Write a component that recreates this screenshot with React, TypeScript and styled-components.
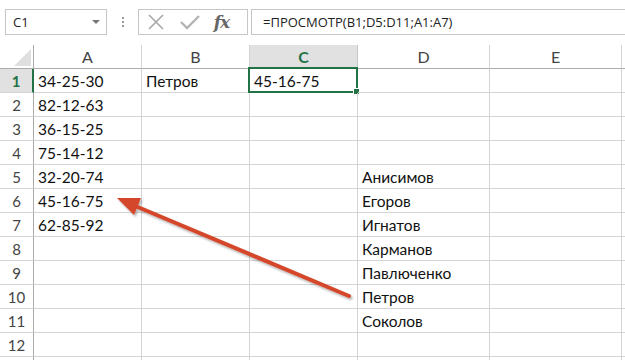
import React from "react";
import styled, { createGlobalStyle, css } from "styled-components";

const Global = createGlobalStyle`
  html, body { margin: 0; padding: 0; background: #fff; }
  #root { width: 625px; height: 360px; overflow: hidden; }
`;

const COLS = "34px 108px 108px 108px 132px 132px 132px";
const GRID = "#d4d4d4";
const HEAD_LINE = "#ababab";
const GREEN = "#217346";

const Page = styled.div`
  position: relative;
  width: 625px;
  height: 360px;
  overflow: hidden;
  background: #fff;
  font-family: Lato, "Open Sans", sans-serif;
`;

const FormulaRow = styled.div`
  display: flex;
  align-items: flex-start;
  height: 45px;
  padding: 9px 0 0 5px;
  box-sizing: border-box;
  font-family: "Open Sans", "Noto Sans", sans-serif;
  font-size: 13px;
  color: #222;
`;

const NameBox = styled.div`
  width: 102px;
  height: 26px;
  box-sizing: border-box;
  border: 1px solid #c6c6c6;
  display: flex;
  align-items: center;
  justify-content: space-between;
  padding: 0 6px 0 7px;
`;

const Caret = styled.span`
  width: 0;
  height: 0;
  border-left: 4px solid transparent;
  border-right: 4px solid transparent;
  border-top: 4px solid #777;
`;

const Dots = styled.div`
  width: 31px;
  height: 26px;
  display: flex;
  flex-direction: column;
  align-items: center;
  justify-content: center;
  gap: 2px;
  span {
    width: 2px;
    height: 2px;
    background: #9a9a9a;
  }
`;

const IconBox = styled.div`
  width: 110px;
  height: 26px;
  box-sizing: border-box;
  border: 1px solid #c6c6c6;
  display: flex;
  align-items: center;
  padding: 0 0 0 8px;
`;

const IconSlot = styled.div`
  width: 37px;
  display: flex;
  align-items: center;
`;

const Fx = styled.span`
  font-family: "DejaVu Serif", "Liberation Serif", serif;
  font-style: italic;
  font-weight: bold;
  font-size: 17px;
  color: #666;
  letter-spacing: -1px;
`;

const FormulaInput = styled.div`
  flex: 1;
  height: 26px;
  margin-left: 3px;
  box-sizing: border-box;
  border: 1px solid #c6c6c6;
  border-right: none;
  display: flex;
  align-items: center;
  padding-left: 11px;
  white-space: nowrap;
`;

const Sheet = styled.div`
  display: flex;
  flex-direction: column;
`;

const Row = styled.div`
  display: grid;
  grid-template-columns: ${COLS};
  height: 24px;
`;

const ColHead = styled.div<{ $active?: boolean }>`
  box-sizing: border-box;
  border-right: 1px solid ${GRID};
  border-bottom: 1px solid ${HEAD_LINE};
  display: flex;
  align-items: center;
  justify-content: center;
  font-size: 16px;
  color: #444;
  ${(p) =>
    p.$active &&
    css`
      background: #e1e1e1;
      color: ${GREEN};
      font-weight: bold;
      border-bottom: 2px solid ${GREEN};
      border-right-color: #c6c6c6;
    `}
`;

const Corner = styled.div`
  position: relative;
  box-sizing: border-box;
  border-right: 1px solid ${HEAD_LINE};
  border-bottom: 1px solid ${HEAD_LINE};
  &::after {
    content: "";
    position: absolute;
    right: 2px;
    bottom: 2px;
    width: 0;
    height: 0;
    border-left: 17px solid transparent;
    border-bottom: 17px solid #dfdfdf;
  }
`;

const RowHead = styled.div<{ $active?: boolean }>`
  box-sizing: border-box;
  border-right: 1px solid ${HEAD_LINE};
  border-bottom: 1px solid ${GRID};
  display: flex;
  align-items: center;
  justify-content: center;
  font-size: 15px;
  color: #444;
  ${(p) =>
    p.$active &&
    css`
      background: #e1e1e1;
      color: ${GREEN};
      font-weight: bold;
      border-right: 2px solid ${GREEN};
    `}
`;

const Cell = styled.div`
  position: relative;
  box-sizing: border-box;
  border-right: 1px solid ${GRID};
  border-bottom: 1px solid ${GRID};
  display: flex;
  align-items: center;
  padding: 1px 0 0 4px;
  font-size: 15.5px;
  color: #111;
  white-space: nowrap;
`;

const Selection = styled.div`
  position: absolute;
  left: -2px;
  top: -2px;
  right: -1px;
  bottom: -1px;
  border: 2px solid ${GREEN};
  pointer-events: none;
  &::after {
    content: "";
    position: absolute;
    right: -4px;
    bottom: -4px;
    width: 5px;
    height: 5px;
    background: ${GREEN};
    border: 1px solid #fff;
  }
`;

const ArrowLayer = styled.svg`
  position: absolute;
  left: 0;
  top: 0;
  pointer-events: none;
`;

const colLetters = ["A", "B", "C", "D", "E", "F"];

const colA = ["34-25-30", "82-12-63", "36-15-25", "75-14-12", "32-20-74", "45-16-75", "62-85-92"];
const colD: Record<number, string> = {
  5: "Анисимов",
  6: "Егоров",
  7: "Игнатов",
  8: "Карманов",
  9: "Павлюченко",
  10: "Петров",
  11: "Соколов",
};

function cellValue(r: number, c: number): string {
  if (c === 0) return colA[r - 1] ?? "";
  if (c === 1 && r === 1) return "Петров";
  if (c === 2 && r === 1) return "45-16-75";
  if (c === 3) return colD[r] ?? "";
  return "";
}

export default function App() {
  const rows = Array.from({ length: 13 }, (_, i) => i + 1);
  return (
    <Page>
      <Global />
      <FormulaRow>
        <NameBox>
          <span>C1</span>
          <Caret />
        </NameBox>
        <Dots>
          <span />
          <span />
          <span />
        </Dots>
        <IconBox>
          <IconSlot>
            <svg width="18" height="18" viewBox="0 0 18 18">
              <path d="M2 2 L16 16 M16 2 L2 16" stroke="#a8a8a8" strokeWidth="1.6" fill="none" />
            </svg>
          </IconSlot>
          <IconSlot>
            <svg width="20" height="18" viewBox="0 0 20 18">
              <path d="M1 9 L7 15 L19 3" stroke="#b4b4b4" strokeWidth="2.4" fill="none" />
            </svg>
          </IconSlot>
          <IconSlot>
            <Fx>fx</Fx>
          </IconSlot>
        </IconBox>
        <FormulaInput>=ПРОСМОТР(B1;D5:D11;A1:A7)</FormulaInput>
      </FormulaRow>
      <Sheet>
        <Row>
          <Corner />
          {colLetters.map((l) => (
            <ColHead key={l} $active={l === "C"}>
              {l === "F" ? "" : l}
            </ColHead>
          ))}
        </Row>
        {rows.map((r) => (
          <Row key={r}>
            <RowHead $active={r === 1}>{r <= 12 ? r : ""}</RowHead>
            {colLetters.map((l, c) => (
              <Cell key={l}>
                {cellValue(r, c)}
                {r === 1 && c === 2 && <Selection />}
              </Cell>
            ))}
          </Row>
        ))}
      </Sheet>
      <ArrowLayer width="625" height="360" viewBox="0 0 625 360">
        <defs>
          <filter id="sh" x="-10%" y="-10%" width="130%" height="140%">
            <feDropShadow dx="1.5" dy="2" stdDeviation="1.2" floodColor="#000" floodOpacity="0.3" />
          </filter>
        </defs>
        <g filter="url(#sh)">
          <line x1="349" y1="296" x2="133" y2="205" stroke="#d4472a" strokeWidth="4" strokeLinecap="round" />
          <polygon points="117,198 141,198 134,215" fill="#d4472a" />
        </g>
      </ArrowLayer>
    </Page>
  );
}
